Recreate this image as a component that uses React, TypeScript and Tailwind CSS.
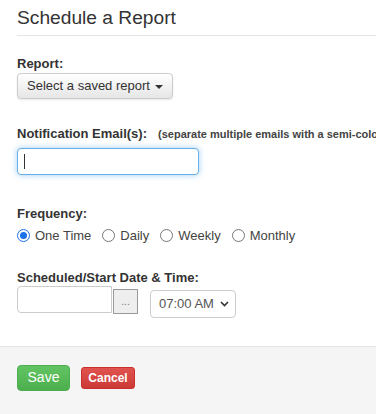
import { useState } from 'react'

const font = { fontFamily: '"Liberation Sans", Arial, Helvetica, sans-serif' }

const options = ['One Time', 'Daily', 'Weekly', 'Monthly']

function Radio({ checked }: { checked: boolean }) {
  return (
    <span
      className={
        checked
          ? 'flex h-[13px] w-[13px] items-center justify-center rounded-full border border-[#1a73e8] bg-white'
          : 'h-[13px] w-[13px] rounded-full border border-[#767676] bg-white'
      }
    >
      {checked && <span className="h-[7px] w-[7px] rounded-full bg-[#1a73e8]" />}
    </span>
  )
}

export default function App() {
  const [freq, setFreq] = useState('One Time')

  return (
    <div className="min-h-[414px] w-[376px] overflow-hidden bg-white text-[#333]" style={font}>
      <div className="pl-[17px]">
        <h1 className="border-b border-[#e5e5e5] pb-[6px] pt-[7px] text-[19.2px] font-normal leading-[22px]">
          Schedule a Report
        </h1>

        <div className="mt-[20px] text-[13px] font-bold leading-4">Report:</div>
        <button className="mt-[1px] flex h-[26px] w-[156px] items-center justify-center rounded-[4px] border border-[#ccc] bg-gradient-to-b from-white to-[#e6e6e6] text-[13px] text-[#333] shadow-[0_1px_2px_rgba(0,0,0,0.1)]">
          Select a saved report
          <span className="ml-[5px] mt-[1px] h-0 w-0 border-x-[4px] border-t-[4px] border-x-transparent border-t-[#333]" />
        </button>

        <div className="mt-[27px] flex items-baseline overflow-hidden whitespace-nowrap">
          <span className="text-[13px] font-bold leading-4">Notification Email(s):</span>
          <span className="ml-[11px] text-[11px] font-bold text-[#444]">
            (separate multiple emails with a semi-colon)
          </span>
        </div>
        <div className="mt-[5px] flex h-[27px] w-[182px] items-center rounded-[4px] border border-[#66afe9] bg-white pl-[6px] shadow-[0_0_6px_rgba(102,175,233,0.6)]">
          <span className="h-[15px] w-px bg-[#333]" />
        </div>

        <div className="mt-[31px] text-[13px] font-bold leading-4">Frequency:</div>
        <div className="mt-[6px] flex h-4 items-center text-[13px] text-[#444]">
          {options.map((o) => (
            <label key={o} className="mr-[11px] flex items-center" onClick={() => setFreq(o)}>
              <Radio checked={freq === o} />
              <span className="ml-[5px]">{o}</span>
            </label>
          ))}
        </div>

        <div className="mt-[26px] text-[13px] font-bold leading-4">Scheduled/Start Date &amp; Time:</div>
        <div className="flex items-start">
          <div className="h-[27px] w-[95px] rounded-l-[4px] border border-[#ccc] bg-white" />
          <button className="ml-px mt-[3px] flex h-[25px] w-[25px] items-center justify-center border border-[#999] bg-[#eee] text-[10px] text-[#777]">
            ...
          </button>
          <div className="ml-[12px] mt-[4px] flex h-[28px] w-[86px] items-center justify-between rounded-[4px] border border-[#ccc] bg-white pl-[8px] pr-[6px] text-[13px] text-[#555]">
            07:00 AM
            <svg width="9" height="6" viewBox="0 0 9 6" fill="none">
              <path d="M1 1l3.5 3.5L8 1" stroke="#333" strokeWidth="1.6" />
            </svg>
          </div>
        </div>
      </div>

      <div className="mt-[28px] flex h-[70px] items-start border-t border-[#e5e5e5] bg-[#f5f5f5] pl-[17px] pt-[18px]">
        <button className="flex h-[26px] w-[53px] items-center justify-center rounded-[4px] border border-[#4cae4c] bg-gradient-to-b from-[#62c462] to-[#4cae4c] text-[14px] text-white">
          Save
        </button>
        <button className="ml-[11px] mt-[2px] flex h-[22px] w-[54px] items-center justify-center rounded-[3px] border border-[#c9302c] bg-gradient-to-b from-[#e0534f] to-[#cb3a36] text-[12px] font-bold text-white">
          Cancel
        </button>
      </div>
    </div>
  )
}
